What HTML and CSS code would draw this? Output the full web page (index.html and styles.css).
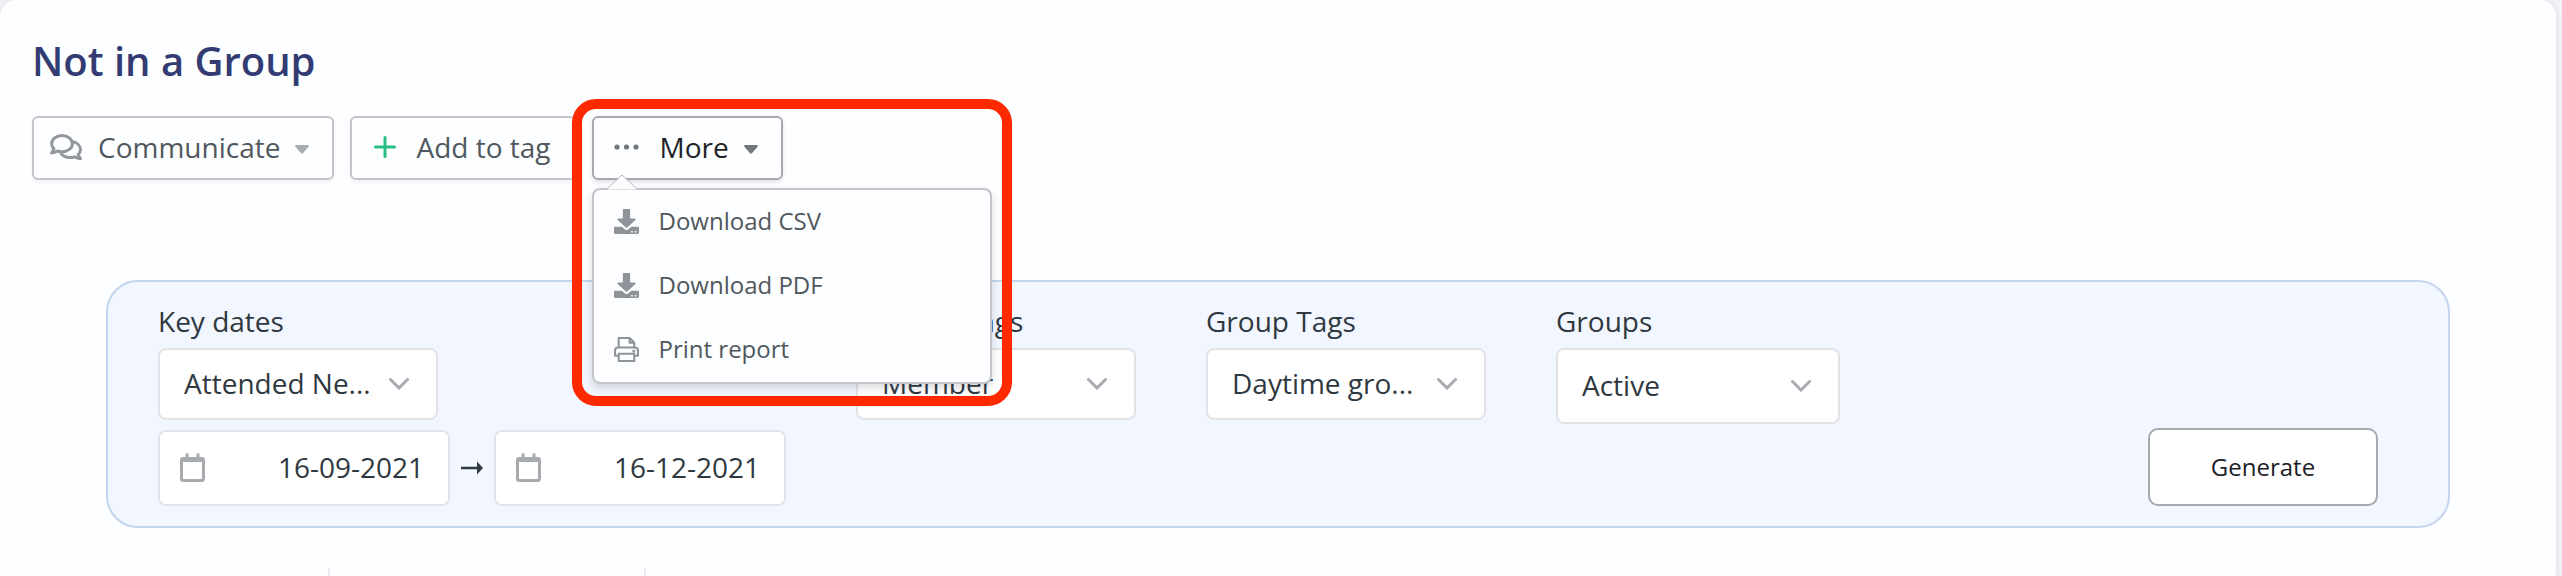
FILE: index.html
```html
<!DOCTYPE html>
<html lang="en">
<head>
    <meta charset="utf-8">
    <title>Not in a Group</title>
    <meta name="viewport" content="width=device-width, initial-scale=1">
    <link rel="stylesheet" href="styles.css">
</head>
<body>
    <main class="card">
        <h1>Not in a Group</h1>

        <div class="toolbar">
            <button type="button" class="btn btn-communicate">
                <svg class="icon-comments" viewBox="0 0 32 26" fill="none" stroke="#94979c" stroke-width="3" stroke-linejoin="round">
                    <path d="M12 1.600c5.800 0 10.400 3.600 10.400 8.100s-4.600 8.100-10.400 8.100c-1.600 0-3.100-.3-4.400-.8-1.600 1-3.600 1.900-6 1.900 1.200-1.300 2-2.800 2.300-4.300C2.500 13.200 1.600 11.500 1.600 9.700c0-4.500 4.600-8.100 10.400-8.100z"/>
                    <path d="M22.500 7.800c4.600.8 8 3.900 8 7.700 0 1.900-.9 3.600-2.300 4.900.3 1.500 1.100 3 2.300 4.200-2.400 0-4.400-.8-6-1.800-1.400.5-2.900.8-4.500.8-4.100 0-7.600-1.900-9.300-4.700"/>
                </svg>
                <span>Communicate</span>
                <svg class="caret" viewBox="0 0 16 10"><path fill="#a9acb0" d="M1.500 0h13c1.200 0 1.600 1.200.8 2L9 9.300c-.6.6-1.400.6-2 0L.7 2C-.1 1.200.3 0 1.500 0z"/></svg>
            </button>
            <button type="button" class="btn btn-tag">
                <svg class="icon-plus" viewBox="0 0 22 22" stroke="#27bd83" stroke-width="3" stroke-linecap="round"><path d="M11 1.500v19M1.500 11h19"/></svg>
                <span>Add to tag</span>
            </button>
            <div class="more">
                <button type="button" class="btn btn-more" aria-expanded="true">
                    <svg class="icon-dots" viewBox="0 0 26 6" fill="#71767b"><circle cx="3" cy="3" r="2.600"/><circle cx="12.500" cy="3" r="2.600"/><circle cx="22" cy="3" r="2.600"/></svg>
                    <span>More</span>
                    <svg class="caret" viewBox="0 0 16 10"><path fill="#71767b" d="M1.500 0h13c1.200 0 1.600 1.200.8 2L9 9.300c-.6.6-1.400.6-2 0L.7 2C-.1 1.200.3 0 1.500 0z"/></svg>
                </button>
                <div class="menu">
                    <svg class="menu-arrow" viewBox="0 0 32 16"><path fill="#fdfeff" stroke="#b4b5ba" d="M.5 15.500 16 1l15.500 14.500"/></svg>
                    <a href="#">
                        <svg viewBox="0 0 24 24" fill="#8f9399"><path d="M9.500 0h5c.6 0 1 .4 1 1v8h4.300c.9 0 1.300 1 .7 1.600l-7.800 7.200c-.4.400-1 .4-1.400 0L3.500 10.600C2.900 10 3.300 9 4.200 9h4.300V1c0-.6.4-1 1-1z"/><path fill-rule="evenodd" d="M1.200 17h6.300l2.500 2.300c1.100 1.100 2.900 1.100 4 0l2.500-2.300h6.300c.7 0 1.200.5 1.200 1.100v4.800c0 .6-.5 1.100-1.200 1.100H1.200C.5 24 0 23.500 0 22.900v-4.800C0 17.500.5 17 1.200 17zm15.300 4h1.500v1.500h-1.500zm3.500 0h1.500v1.500H20z"/></svg>
                        Download CSV
                    </a>
                    <a href="#">
                        <svg viewBox="0 0 24 24" fill="#8f9399"><path d="M9.500 0h5c.6 0 1 .4 1 1v8h4.300c.9 0 1.300 1 .7 1.600l-7.800 7.200c-.4.400-1 .4-1.400 0L3.500 10.600C2.900 10 3.300 9 4.200 9h4.300V1c0-.6.4-1 1-1z"/><path fill-rule="evenodd" d="M1.200 17h6.300l2.500 2.300c1.100 1.100 2.900 1.100 4 0l2.500-2.300h6.300c.7 0 1.200.5 1.200 1.100v4.800c0 .6-.5 1.100-1.200 1.100H1.200C.5 24 0 23.500 0 22.900v-4.800C0 17.500.5 17 1.200 17zm15.300 4h1.500v1.500h-1.500zm3.500 0h1.500v1.500H20z"/></svg>
                        Download PDF
                    </a>
                    <a href="#">
                        <svg viewBox="0 0 24 24" fill="none" stroke="#8f9399" stroke-width="2" stroke-linejoin="round"><path d="M4.500 10V1H15l4.500 4.500V10M15 1v4.500h4.500M4.500 18H1v-5c0-1.700 1.300-3 3-3h16c1.700 0 3 1.300 3 3v5h-3.500M4.500 16h15v7h-15z"/><circle cx="19" cy="13.500" r=".6"/></svg>
                        Print report
                    </a>
                </div>
                <div class="highlight"></div>
            </div>
        </div>

        <form class="filters">
            <div class="field key-dates">
                <label for="keyDate">Key dates</label>
                <div class="select">
                    <select id="keyDate"><option>Attended Ne...</option></select>
                    <svg viewBox="0 0 20 12"><path d="M1.500 1.500 10 10l8.500-8.500"/></svg>
                </div>
                <div class="dates">
                    <div class="date">
                        <svg viewBox="0 0 25 29"><path fill="#a7abaf" fill-rule="evenodd" d="M5.500 1.500a1.500 1.500 0 0 1 3 0V4h8V1.500a1.500 1.500 0 0 1 3 0V4H22a3 3 0 0 1 3 3v19a3 3 0 0 1-3 3H3a3 3 0 0 1-3-3V7a3 3 0 0 1 3-3h2.500zM3 9v16.500l.5.5h18l.5-.5V9z"/></svg>
                        <input type="text" aria-label="From" value="16-09-2021">
                    </div>
                    <svg class="to" viewBox="0 0 22 14"><path fill="#2f393f" d="M0 5.800h16V.5L22 7l-6 6.500V8.200H0z"/></svg>
                    <div class="date">
                        <svg viewBox="0 0 25 29"><path fill="#a7abaf" fill-rule="evenodd" d="M5.500 1.500a1.500 1.500 0 0 1 3 0V4h8V1.500a1.500 1.500 0 0 1 3 0V4H22a3 3 0 0 1 3 3v19a3 3 0 0 1-3 3H3a3 3 0 0 1-3-3V7a3 3 0 0 1 3-3h2.500zM3 9v16.500l.5.5h18l.5-.5V9z"/></svg>
                        <input type="text" aria-label="To" value="16-12-2021">
                    </div>
                </div>
            </div>
            <div class="field">
                <label for="contactTags">Contact Tags</label>
                <div class="select">
                    <select id="contactTags"><option>Member</option></select>
                    <svg viewBox="0 0 20 12"><path d="M1.500 1.500 10 10l8.500-8.500"/></svg>
                </div>
            </div>
            <div class="field">
                <label for="groupTags">Group Tags</label>
                <div class="select">
                    <select id="groupTags"><option>Daytime gro...</option></select>
                    <svg viewBox="0 0 20 12"><path d="M1.500 1.500 10 10l8.500-8.500"/></svg>
                </div>
            </div>
            <div class="field">
                <label for="groups">Groups</label>
                <div class="select select-large">
                    <select id="groups"><option>Active</option></select>
                    <svg viewBox="0 0 20 12"><path d="M1.500 1.500 10 10l8.500-8.500"/></svg>
                </div>
            </div>
            <button type="button" class="generate">Generate</button>
        </form>

        <div class="columns">
            <div class="col-name"></div>
            <div class="col-date"></div>
        </div>
    </main>
</body>
</html>
```

FILE: styles.css
```css
* {
    box-sizing: border-box;
}

body {
    margin: 0;
    background: #f3f2f5;
    font-family: "Open Sans", "Noto Sans", sans-serif;
    font-size: 28px;
    line-height: 38px;
    color: #2f393f;
}

button,
input,
select {
    font: inherit;
    color: inherit;
}

svg {
    display: block;
    flex: none;
}

.card {
    min-height: 100vh;
    margin-right: 6px;
    padding: 32px 32px 0;
    background: #fdfeff;
    border-radius: 16px 16px 0 0;
    box-shadow: 0 0 6px rgba(60, 40, 80, 0.1);
}

h1 {
    margin: 0 0 26px;
    font-size: 40px;
    line-height: 58px;
    font-weight: 600;
    color: #323c72;
}

/* toolbar */
.toolbar {
    display: flex;
    gap: 16px;
}

.btn {
    display: flex;
    align-items: center;
    height: 64px;
    padding: 0 22px 2px;
    border: 2px solid #c4c5c9;
    border-radius: 6px;
    background: #fdfeff;
    box-shadow: 0 2px 4px rgba(40, 40, 60, 0.06);
    color: #50585e;
    cursor: pointer;
}

.btn-communicate {
    padding: 0 22px 2px 16px;
    gap: 16px;
}

.btn-tag {
    padding-right: 23px;
    gap: 20px;
}

.btn-more {
    gap: 20px;
    padding: 0 22px 2px 20px;
    border-color: #a9aab0;
    box-shadow: 0 2px 4px rgba(40, 40, 60, 0.14);
    color: #1d2226;
}

.icon-comments {
    width: 32px;
    height: 26px;
}

.icon-plus {
    width: 22px;
    height: 22px;
}

.icon-dots {
    width: 26px;
    height: 6px;
}

.caret {
    width: 16px;
    height: 9px;
    margin-top: 4px;
    margin-left: -2px;
}

.btn-more .caret {
    margin-left: -6px;
}

.more {
    position: relative;
}

/* drop-down menu under More */
.menu {
    position: absolute;
    z-index: 1;
    top: 72px;
    left: 0;
    width: 400px;
    border: 2px solid #c4c5c9;
    border-radius: 8px;
    background: #fdfeff;
    box-shadow: 0 4px 8px rgba(40, 40, 60, 0.16);
}

.menu a {
    display: flex;
    align-items: center;
    gap: 20px;
    height: 64px;
    padding: 0 20px 2px;
    font-size: 24px;
    color: #50585e;
    text-decoration: none;
}

.menu a svg {
    width: 25px;
    height: 25px;
}

.menu-arrow {
    position: absolute;
    top: -16px;
    left: 12px;
    width: 32px;
    height: 16px;
}

.highlight {
    position: absolute;
    z-index: 2;
    top: -17px;
    left: -20px;
    width: 440px;
    height: 307px;
    border: 10px solid #ff2900;
    border-radius: 24px;
    pointer-events: none;
}

/* filters */
.filters {
    display: flex;
    gap: 70px;
    margin: 100px 74px 0;
    padding: 20px 70px 20px 50px;
    border: 2px solid #c3d5ee;
    border-radius: 32px;
    background: #f2f6fe;
}

.field label {
    display: block;
    margin-bottom: 8px;
}

.select {
    position: relative;
    width: 280px;
    height: 72px;
}

.select-large {
    width: 284px;
    height: 76px;
}

.select select {
    width: 100%;
    height: 100%;
    padding: 0 24px 2px;
    appearance: none;
    border: 2px solid #e3e2e7;
    border-radius: 8px;
    background: #fff;
}

.select svg {
    position: absolute;
    top: 50%;
    right: 29px;
    width: 20px;
    height: 12px;
    margin-top: -6px;
    fill: none;
    stroke: #aaabb2;
    stroke-width: 3;
    stroke-linecap: round;
    pointer-events: none;
}

.dates {
    display: flex;
    align-items: center;
    gap: 11px;
    margin-top: 10px;
}

.date {
    display: flex;
    align-items: center;
    width: 292px;
    height: 76px;
    padding: 0 24px 2px 20px;
    border: 2px solid #e3e2e7;
    border-radius: 8px;
    background: #fff;
}

.date svg {
    width: 25px;
    height: 29px;
}

.date input {
    flex: 1;
    min-width: 0;
    padding: 0;
    border: 0;
    background: none;
    text-align: right;
}

.to {
    width: 22px;
    height: 14px;
}

.generate {
    align-self: flex-end;
    width: 230px;
    height: 78px;
    margin-left: auto;
    border: 2px solid #a6a9ad;
    border-radius: 10px;
    background: #fff;
    font-size: 24px;
    color: #1d2226;
    cursor: pointer;
}

/* column lines of the results below */
.columns {
    display: flex;
    height: 8px;
    margin-top: 40px;
}

.columns div {
    border-right: 2px solid #ebeaee;
}

.col-name {
    width: 298px;
}

.col-date {
    width: 316px;
}
```
